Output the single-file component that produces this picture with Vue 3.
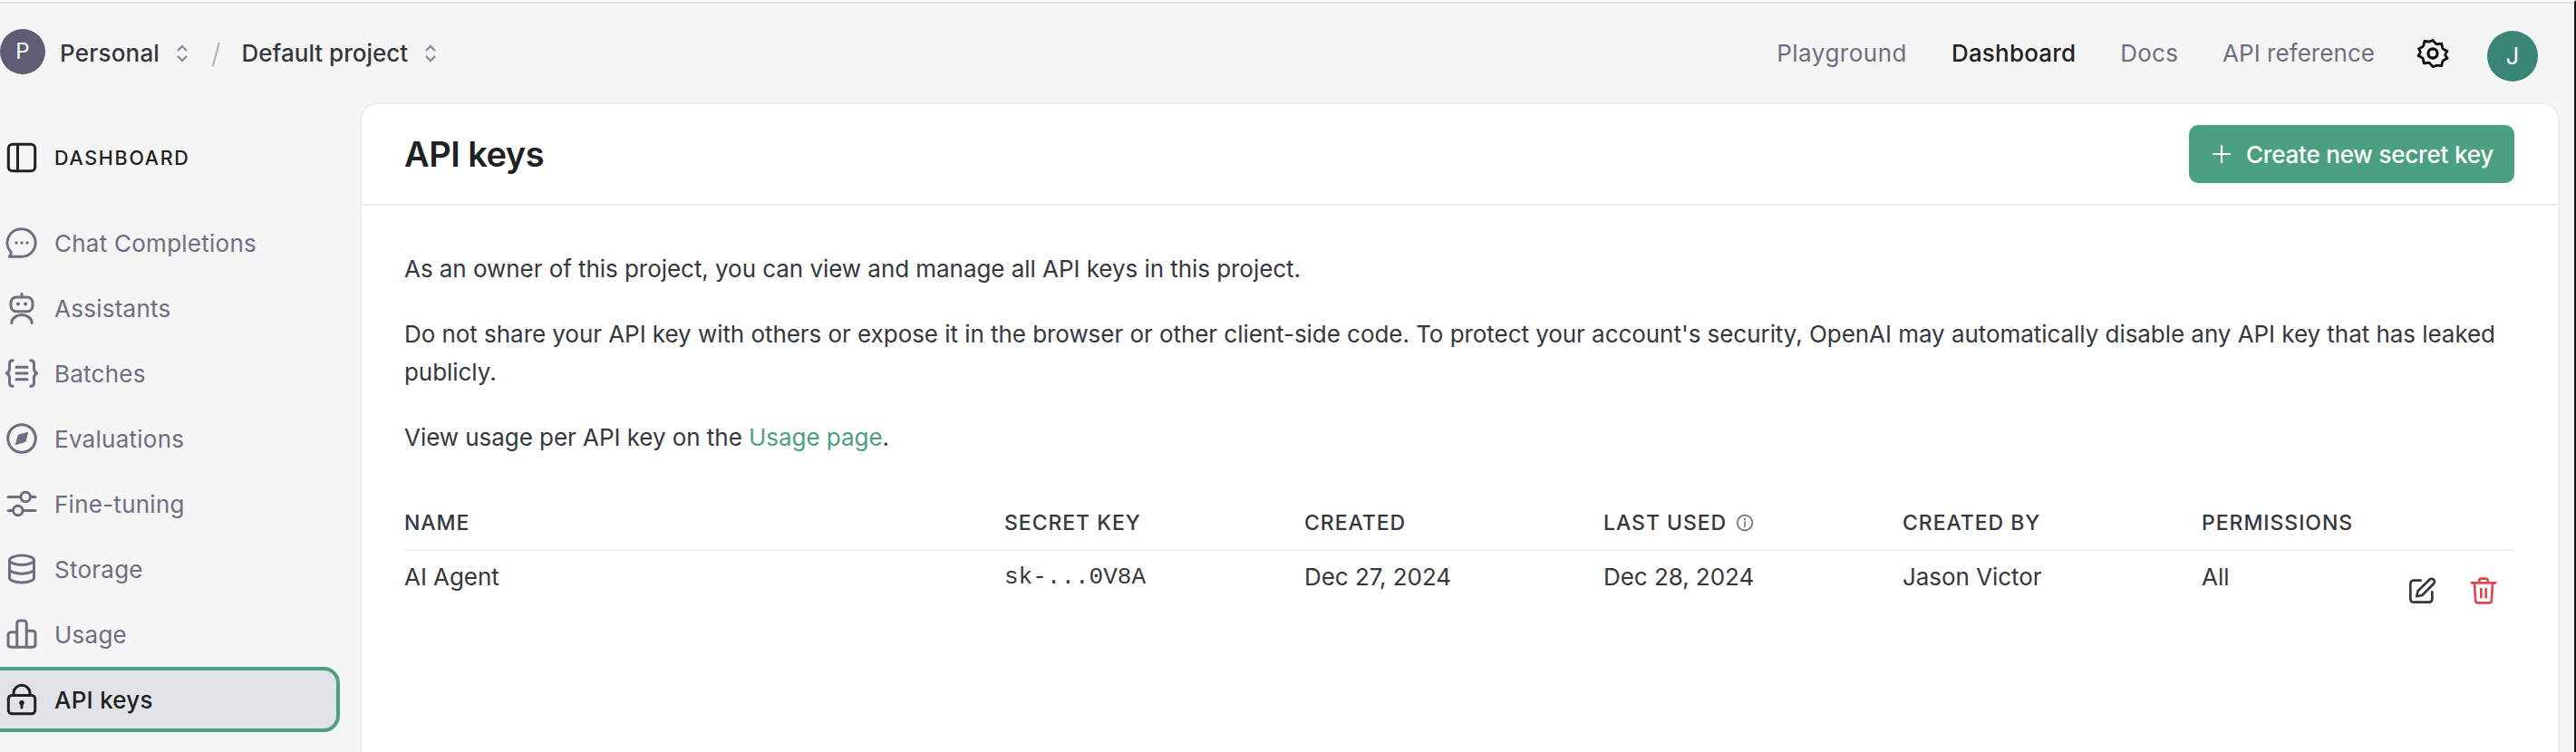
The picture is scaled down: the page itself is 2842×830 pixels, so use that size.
<script setup>
const nav = [
  { label: 'Chat Completions', icon: 'chat' },
  { label: 'Assistants', icon: 'bot' },
  { label: 'Batches', icon: 'batch' },
  { label: 'Evaluations', icon: 'compass' },
  { label: 'Fine-tuning', icon: 'sliders' },
  { label: 'Storage', icon: 'db' },
  { label: 'Usage', icon: 'bars' },
  { label: 'API keys', icon: 'lock', active: true },
]
</script>

<template>
  <div class="page">
    <header class="top">
      <div class="crumbs">
        <span class="avatar-p">P</span>
        <span class="crumb c1">Personal</span>
        <svg class="updown" viewBox="0 0 16 24"><path d="M3 9l5-5 5 5M3 15l5 5 5-5" /></svg>
        <span class="slash">/</span>
        <span class="crumb">Default project</span>
        <svg class="updown" viewBox="0 0 16 24"><path d="M3 9l5-5 5 5M3 15l5 5 5-5" /></svg>
      </div>
      <nav class="links">
        <span class="link l1">Playground</span>
        <span class="link on l2">Dashboard</span>
        <span class="link l3">Docs</span>
        <span class="link l4">API reference</span>
        <svg class="gear" viewBox="0 0 24 24"><path d="M12 1.8l2.3 2.6c.3.3.7.4 1.1.4l3.4-.4.7 3.3c.1.4.3.7.7.9l3 1.7-1.4 2.1c-.2.4-.2.8 0 1.2l1.4 2.1-3 1.7c-.4.2-.6.5-.7.9l-.7 3.3-3.4-.4c-.4 0-.8.1-1.1.4L12 22.2l-2.3-2.6c-.3-.3-.7-.4-1.1-.4l-3.4.4-.7-3.3c-.1-.4-.3-.7-.7-.9l-3-1.7 1.4-2.1c.2-.4.2-.8 0-1.2L1.2 8.4l3-1.7c.4-.2.6-.5.7-.9l.7-3.3 3.4.4c.4 0 .8-.1 1.1-.4z" transform="translate(1.2 1.2) scale(.9)" /><circle cx="12" cy="12" r="3.2" /></svg>
        <span class="avatar-j">J</span>
      </nav>
    </header>
    <div class="body">
      <aside class="side">
        <div class="side-head">
          <svg class="ico dark" viewBox="0 0 24 24"><rect x="2.2" y="2.2" width="19.6" height="19.6" rx="3" /><path d="M9 2.2v19.6" /></svg>
          <span>DASHBOARD</span>
        </div>
        <ul class="menu">
          <li v-for="n in nav" :key="n.label" class="item" :class="{ active: n.active }">
            <svg class="ico" viewBox="0 0 24 24">
              <template v-if="n.icon === 'chat'">
                <path d="M12 1.9a10.1 10.1 0 0 1 0 20.2H3c.9-.9 1.3-2 1.1-3.2A10.1 10.1 0 0 1 12 1.9z" />
                <circle class="dot" cx="8" cy="12" r="1.1" /><circle class="dot" cx="12" cy="12" r="1.1" /><circle class="dot" cx="16" cy="12" r="1.1" />
              </template>
              <template v-else-if="n.icon === 'bot'">
                <rect x="4" y="4" width="16" height="10.5" rx="4" />
                <path d="M12 1.5V4M4.5 23c.4-3.6 3.4-6 7.5-6s7.1 2.4 7.5 6" />
                <circle class="dot" cx="9.3" cy="9" r="1.4" /><circle class="dot" cx="14.7" cy="9" r="1.4" />
              </template>
              <template v-else-if="n.icon === 'batch'">
                <path d="M5.5 2.5c-1.7 0-2.5.8-2.5 2.4v3.6c0 1.9-.7 3-2.2 3.5 1.5.5 2.2 1.6 2.2 3.5v3.6c0 1.6.8 2.4 2.5 2.4M18.5 2.5c1.7 0 2.5.8 2.5 2.4v3.6c0 1.9.7 3 2.2 3.5-1.5.5-2.2 1.6-2.2 3.5v3.6c0 1.6-.8 2.4-2.5 2.4M8 7.5h8M8 12h8M8 16.5h8" />
              </template>
              <template v-else-if="n.icon === 'compass'">
                <circle cx="12" cy="12" r="10.2" />
                <path class="solid" d="M16.8 7.2l-1.6 6.4c-.2.6-.6 1-1.2 1.2l-6.8 2 1.8-6.8c.2-.6.6-1 1.2-1.2z" />
              </template>
              <template v-else-if="n.icon === 'sliders'">
                <path d="M2 7h9M18.5 7H22M2 17h3.5M13 17h9" />
                <circle cx="14.8" cy="7" r="3.5" /><circle cx="9.2" cy="17" r="3.5" />
              </template>
              <template v-else-if="n.icon === 'db'">
                <ellipse cx="12" cy="5.5" rx="9" ry="3.5" />
                <path d="M3 5.5v13c0 1.9 4 3.5 9 3.5s9-1.6 9-3.5v-13M3 12c0 1.9 4 3.5 9 3.5s9-1.6 9-3.5" />
              </template>
              <template v-else-if="n.icon === 'bars'">
                <path d="M8.5 21.5V10.5H4a2 2 0 0 0-2 2v7a2 2 0 0 0 2 2h16a2 2 0 0 0 2-2v-8a2 2 0 0 0-2-2h-4.5v11M8.5 10.5V4a2 2 0 0 1 2-2h3a2 2 0 0 1 2 2v17.5" />
              </template>
              <template v-else>
                <rect x="2.2" y="9" width="19.6" height="13.5" rx="2.5" />
                <path d="M6 9V7.5a6 6 0 0 1 12 0V9" />
                <circle class="dot" cx="12" cy="14.5" r="1.8" />
                <path d="M12 15v3" />
              </template>
            </svg>
            <span>{{ n.label }}</span>
          </li>
        </ul>
      </aside>
      <main class="card">
        <div class="card-head">
          <h1>API keys</h1>
          <button class="create">
            <svg class="plus" viewBox="0 0 24 24"><path d="M12 3v18M3 12h18" /></svg>
            <span>Create new secret key</span>
          </button>
        </div>
        <div class="card-body">
          <p>As an owner of this project, you can view and manage all API keys in this project.</p>
          <p>Do not share your API key with others or expose it in the browser or other client-side code. To protect your account's security, OpenAI may automatically disable any API key that has leaked publicly.</p>
          <p>View usage per API key on the <a>Usage page</a>.</p>
          <div class="table">
            <div class="row head">
              <span>NAME</span>
              <span>SECRET KEY</span>
              <span>CREATED</span>
              <span class="used">LAST USED
                <svg class="info" viewBox="0 0 24 24"><circle cx="12" cy="12" r="10" /><path d="M12 11v6.5M12 6.5V8" /></svg>
              </span>
              <span>CREATED BY</span>
              <span>PERMISSIONS</span>
            </div>
            <div class="row data">
              <span>AI Agent</span>
              <span class="mono">sk-...0V8A</span>
              <span>Dec 27, 2024</span>
              <span>Dec 28, 2024</span>
              <span>Jason Victor</span>
              <div class="perm">
                <span>All</span>
                <div class="acts">
                  <svg class="act" viewBox="0 0 24 24"><path d="M11 3.5H5A2.5 2.5 0 0 0 2.5 6v13A2.5 2.5 0 0 0 5 21.5h13a2.5 2.5 0 0 0 2.5-2.5v-6" /><path d="M18.3 2.8a2.4 2.4 0 0 1 3.4 3.4l-9.5 9.5-4.5 1 1-4.5z" /></svg>
                  <svg class="act red" viewBox="0 0 24 24"><path d="M2 5.5h20M8.5 5.5v-2A1.500 1.500 0 0 1 10 2h4a1.500 1.500 0 0 1 1.500 1.500v2M4.500 5.500l.8 14.500a2 2 0 0 0 2 2h9.400a2 2 0 0 0 2-2l.8-14.500M10 10.500v7M14 10.500v7" /></svg>
                </div>
              </div>
            </div>
          </div>
        </div>
      </main>
    </div>
  </div>
</template>

<style scoped>
.page {
  width: 2842px;
  height: 830px;
  overflow: hidden;
  background: #f5f5f5;
  border-top: 2px solid #fcfcfc;
  border-right: 2px solid #141210;
  box-sizing: border-box;
  display: flex;
  flex-direction: column;
  font-family: Inter, "Liberation Sans", sans-serif;
  font-size: 26px;
  color: #353740;
  letter-spacing: -0.05px;
}
.top {
  height: 111px;
  box-sizing: border-box;
  border-top: 2px solid #e3e3e3;
  flex: none;
  display: flex;
  align-items: center;
  justify-content: space-between;
  padding-right: 40px;
}
.crumbs, .links { display: flex; align-items: center; }
.avatar-p {
  width: 50px; height: 50px; border-radius: 50%;
  background: #5d5d73; color: #fff;
  display: flex; align-items: center; justify-content: center;
  font-size: 24px; margin-right: 16px; margin-top: -4px;
}
.crumb { font-weight: 500; font-size: 26px; white-space: nowrap; letter-spacing: 0; }
.c1 { letter-spacing: 0.2px; }
.updown { width: 16px; height: 24px; margin-left: 17px; fill: none; stroke: #8e8ea0; stroke-width: 2.4; }
.slash { color: #acacbe; font-size: 30px; margin: 0 23px 0 24px; font-weight: 300; }
.link { color: #6e6e80; font-size: 26px; white-space: nowrap; letter-spacing: 0.2px; }
.link.on { color: #202123; font-weight: 500; }
.l1 { letter-spacing: 0.5px; }
.l2 { margin-left: 49px; }
.l3 { margin-left: 49px; }
.l4 { margin-left: 49px; letter-spacing: 0.05px; }
.gear { width: 38px; height: 38px; margin-left: 45px; fill: none; stroke: #0d0d0d; stroke-width: 2; stroke-linejoin: round; }
.avatar-j {
  width: 56px; height: 56px; border-radius: 50%;
  background: #3a8578; color: #fff; margin-left: 41px; margin-top: 6px;
  display: flex; align-items: center; justify-content: center; font-size: 26px;
}
.body { flex: 1; display: flex; min-height: 0; }
.side { width: 397px; flex: none; }
.side-head {
  height: 68px; margin-top: 27px;
  display: flex; align-items: center; gap: 18px; padding-left: 6px;
  font-size: 21.5px; font-weight: 500; letter-spacing: 1.7px; color: #202123;
}
.menu { list-style: none; margin: 24px 0 0; padding: 0; }
.item {
  height: 72px; box-sizing: border-box;
  display: flex; align-items: center; gap: 18px; padding-left: 6px;
  color: #6e6e80; width: 375px;
  border-radius: 0 18px 18px 0;
  letter-spacing: 0.25px;
}
.item.active {
  background: #e2e3e8; color: #202123; font-weight: 500;
  border: 4px solid #4ca082; border-left: 0;
}
.ico { width: 36px; height: 36px; flex: none; fill: none; stroke: #6e6e80; stroke-width: 2; stroke-linecap: round; stroke-linejoin: round; }
.ico .dot { fill: #6e6e80; stroke: none; }
.ico .solid { fill: #6e6e80; stroke: none; }
.active .ico { stroke: #202123; }
.active .ico .dot { fill: #202123; }
.ico.dark { stroke: #202123; }
.card {
  width: 2427px; flex: none; box-sizing: border-box;
  background: #fff;
  border: 2px solid #ececf1; border-bottom: 0;
  border-radius: 20px 20px 0 0;
}
.card-head {
  height: 112px; box-sizing: border-box;
  border-bottom: 2px solid #ececf1;
  display: flex; align-items: center; justify-content: space-between;
  padding: 0 48px 0 47px;
}
h1 { margin: 0; font-size: 38px; font-weight: 600; color: #202123; letter-spacing: -0.5px; }
.create {
  width: 359px; height: 64px; border: 0; border-radius: 10px;
  background: #4ca082; color: #fff; font: inherit; font-weight: 500; letter-spacing: -0.2px;
  display: flex; align-items: center; justify-content: center; gap: 14px;
}
.plus { width: 26px; height: 26px; fill: none; stroke: #fff; stroke-width: 2; }
.card-body { padding: 49px 48px 0 47px; }
p { margin: 0 0 30px; line-height: 42px; }
p a { color: #4ca082; }
.table { margin-top: 51px; }
.row { display: grid; grid-template-columns: 662px 331px 330px 330px 330px 1fr; }
.row.head {
  font-size: 23px; font-weight: 500; line-height: 44px; padding-bottom: 7px;
  border-bottom: 2px solid #ececf1; letter-spacing: 0.95px;
}
.used { display: flex; align-items: center; gap: 10px; }
.info { width: 20px; height: 20px; fill: none; stroke: #6e6e80; stroke-width: 2; stroke-linecap: round; }
.row.data { line-height: 42px; padding-top: 8px; }
.mono { font-family: "Liberation Mono", "DejaVu Sans Mono", monospace; font-size: 26px; letter-spacing: 0; }
.perm { display: flex; justify-content: space-between; }
.acts { display: flex; gap: 36px; padding: 20px 18px 0 0; }
.act { width: 32px; height: 32px; fill: none; stroke: #353740; stroke-width: 2; stroke-linecap: round; stroke-linejoin: round; }
.act.red { stroke: #e0474c; }
</style>
